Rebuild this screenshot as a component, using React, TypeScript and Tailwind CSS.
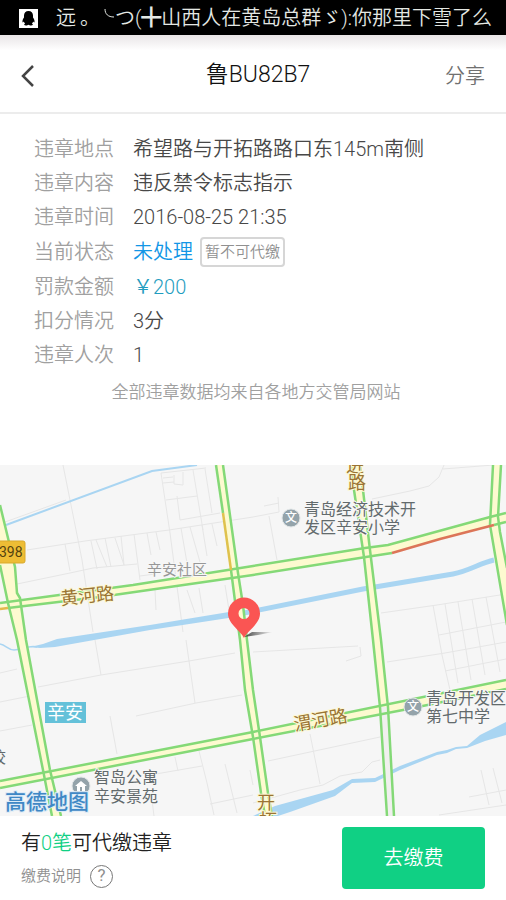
const details = [
   { label: "违章地点", value: "希望路与开拓路路口东145m南侧" },
   { label: "违章内容", value: "违反禁令标志指示" },
   { label: "违章时间", value: "2016-08-25 21:35" },
   { label: "当前状态", value: "未处理", tag: "暂不可代缴", color: "text-[#1296e6]" },
   { label: "罚款金额", value: "￥200", color: "text-[#1f9dc0]" },
   { label: "扣分情况", value: "3分" },
   { label: "违章人次", value: "1" },
];

// surface of every main road
const roads = [
   "M-9 505 0 565 8 603 17 640 43 770 52 816 61 816 50 770 26 640 19 597 15 567 0 505Z",
   "M0 603 133 585 253 566 365 548 388 545 490 517 506 513 506 522 490 526 392 553 366 557 253 575 100 597 0 609Z",
   "M216 465 223 513 231 570 240 640 245 690 253 737 261 793 265 816 272 816 268 793 260 737 253 690 247 640 243 605 238 573 223 465Z",
   "M351 465 354 490 364 557 373 640 380 707 388 707 381 640 370 550 363 490 360 465Z",
   "M493 465 490 525 506 623 506 563 500 532 498 517 501 465Z",
   "M0 781 253 732 506 680 506 689 403 710 253 739 0 788Z",
];

// traffic lines along both sides
const clearTraffic = [
   "M0 565 8 603 17 640 43 770 52 816",
   "M0 505 15 567 17 593 20 598 26 640 50 770 61 816",
   "M0 603 133 585 253 566 365 548 388 545 490 517 506 513",
   "M8 608 100 597 253 575 366 557 392 553",
   "M494 525 506 522",
   "M216 465 223 513",
   "M231 570 240 640 245 690 253 737 261 793 265 816",
   "M223 465 238 573 243 605 247 640 253 690 260 737 268 793 272 816",
   "M351 465 354 490 364 557 373 640 380 707 387 816",
   "M360 465 363 490 370 550 381 640 388 707 394 816",
   "M493 465 490 525 507 625",
   "M501 465 498 517 500 532 507 568",
   "M0 781 253 732 506 680",
   "M0 788 253 739 403 710 506 689",
];

const lanes = [
   "M63 465 70 500 82 560 93 632",
   "M5 522 66 500",
   "M27 550 85 541 169 530 253 517",
   "M17 584 70 573 93 568 137 564",
   "M65 544 70 571M91 541 97 569M96 540 107 567M105 538 111 567M115 538 124 565M121 536 124 565M134 534 140 580",
   "M161 473 170 533 183 632M161 473 206 468M166 500 197 496M177 496 180 520 220 513M193 470 203 530M205 469 212 513",
   "M174 475 174 484 183 485 183 472M163 478 173 477M163 483 174 482",
   "M147 533 151 555M156 532 160 550M181 528 187 563M190 527 200 562M202 525 207 556M212 524 217 546",
   "M155 590 156 610M187 590 195 613M199 588 203 613M225 585 229 610M140 576 155 574",
   "M253 517 279 512 278 497M264 506 279 503M269 516 277 560",
   "M372 499 410 491 429 486 439 477 444 465M443 469 506 464",
   "M381 613 437 605 506 594M433 605 442 655 450 690M445 604 458 683M458 602 471 680M472 599 485 675M486 597 500 672M439 635 506 622M445 671 506 659M387 662 445 653 506 642",
   "M0 673 17 669M38 687 101 675 189 661 235 653M95 640 101 675M186 640 195 703M136 716 196 703 242 695",
   "M0 731 32 725M110 716 117 754M253 652 358 646M360 647 361 656 346 661",
   "M150 775 202 766M175 757 178 771M199 751 207 783 214 815M225 764 237 813M210 804 253 795M250 770 253 785M152 800 154 816",
   "M268 761 380 737M310 734 320 784M253 803 300 790 323 785 340 776 362 772 372 762 380 760",
   "M481 770 489 805M493 768 502 803M469 797 506 790M439 815 506 805M0 702 30 696",
];

function StatusBar() {
   return (
      <div className="flex h-[35px] items-center bg-black pl-[19px] pr-[14px] pt-px text-[20px] leading-none font-[350] text-[#e4e8e4]">
         <svg className="size-[19px] shrink-0" viewBox="0 0 19 19" aria-hidden="true">
            <rect width="19" height="19" fill="#fff" />
            <path
               d="M9.5 2C6.700 2 5 4 5 6.600L5 8.500C4 9.800 3.200 11.600 3.500 13.100C3.700 13.900 4.600 13 4.900 12.500C5.100 13.400 5.500 14 6.100 14.500C5.200 15 5 15.500 5.300 16C6.100 16.800 8.600 16.500 9.500 15.700C10.400 16.500 12.900 16.800 13.700 16C14 15.500 13.800 15 12.900 14.500C13.500 14 13.900 13.400 14.100 12.500C14.400 13 15.300 13.900 15.500 13.100C15.800 11.600 15 9.800 14 8.500L14 6.600C14 4 12.300 2 9.500 2Z"
               fill="#000"
            />
         </svg>
         <span className="ml-[18px]">远</span>
         <span className="ml-1">。</span>
         <p className="ml-auto flex items-center whitespace-nowrap">
            <svg className="h-5 w-3" viewBox="0 0 12 20" fill="none" stroke="#e4e8e4" aria-hidden="true">
               <path d="M2 1C2 6 5 9 11 9" />
            </svg>
            つ(╋山西人在黄岛总群ゞ):你那里下雪了么
         </p>
      </div>
   );
}

function Poi({ x, y, lines, home }: any) {
   return (
      <g>
         <circle cx={x} cy={y} r="9" fill="#94a3aa" stroke="#e0e5e6" strokeWidth="1" />
         {home ? (
            <path
               d={`M${x - 6} ${y} L${x} ${y - 5} L${x + 6} ${y} L${x + 4} ${y} V${y + 5} H${x + 1} V${y + 1} H${x - 1} V${y + 5} H${x - 4} V${y}Z`}
               fill="#fff"
            />
         ) : (
            <text x={x} y={y + 4} textAnchor="middle" className="fill-white text-[12px] font-medium">
               文
            </text>
         )}
         {lines.map((line: any) => (
            <text
               key={line.text}
               x={line.x}
               y={line.y}
               className="fill-[#626a6c] stroke-[#f7f7f7] stroke-2 text-[16px] [paint-order:stroke]"
            >
               {line.text}
            </text>
         ))}
      </g>
   );
}

function ViolationMap() {
   return (
      <svg
         className="block h-auto w-full font-normal"
         viewBox="0 465 506 351"
         role="img"
         aria-label="违章地点地图"
      >
         <defs>
            <linearGradient id="pin-shadow">
               <stop offset="0" stopColor="#333" stopOpacity=".9" />
               <stop offset="1" stopColor="#333" stopOpacity="0" />
            </linearGradient>
         </defs>
         <rect y="465" width="506" height="351" fill="#f6f6f6" />

         <g fill="none" stroke="#e6e6e6" strokeWidth="1">
            {lanes.map((d) => (
               <path key={d} d={d} />
            ))}
         </g>

         <g fill="none" stroke="#a9d5f2">
            <path d="M6 525 152 471 197 465" strokeWidth="2" />
            <path d="M0 644 C6 645 8 650 14 650 C22 650 28 645 37 647" strokeWidth="1.5" />
            <path d="M244 613 363 589 453 574 C469 571 480 563 494 560" strokeWidth="5" />
         </g>
         <g fill="#a9d5f2">
            <path d="M30 647 43 644 57 639 150 625 235 611 235 617 150 630 55 647 40 648Z" />
            <path d="M253 816 275 806 333 790 352 779 375 778 400 766 437 752 447 750 456 747 467 746 480 735 506 722 506 735 485 741 467 748 456 749 447 753 437 755 400 770 375 782 352 783 335 796 290 812 278 816Z" />
         </g>

         <g fill="#fdfad0">
            {roads.map((d) => (
               <path key={d} d={d} />
            ))}
         </g>
         <path d="M380 707 387 816 394 816 388 707Z" fill="#f0f0ee" />
         <g fill="none" stroke="#84d977" strokeWidth="2.5">
            {clearTraffic.map((d) => (
               <path key={d} d={d} />
            ))}
         </g>
         <g fill="none" strokeWidth="2.5">
            <path d="M223 513 231 570" stroke="#dfc24d" />
            <path d="M0 609 8 608" stroke="#e3b94d" />
            <path d="M392 553 440 539 494 525" stroke="#dc7558" />
         </g>

         <rect x="-8" y="541" width="33" height="22" rx="2" fill="#eebd35" stroke="#d9a92c" />
         <text x="-1" y="557" className="fill-[#54430f] text-[14px]">
            398
         </text>

         <g className="fill-[#9a7433] stroke-[#fdf8d4] stroke-2 text-[18px] [paint-order:stroke]">
            <text transform="translate(61 605) rotate(-6)">黄河路</text>
            <text transform="translate(295 731) rotate(-10)">渭河路</text>
            <text x="346" y="472">进</text>
            <text x="348" y="489">路</text>
            <text x="257" y="809">开</text>
            <text x="259" y="827">拓</text>
         </g>

         <text x="147" y="575" className="fill-[#979797] stroke-[#f7f7f7] stroke-2 text-[15px] [paint-order:stroke]">
            辛安社区
         </text>
         <text x="-10" y="763" className="fill-[#626a6c] text-[16px]">
            校
         </text>

         <rect x="45" y="702" width="41" height="21" fill="#64c1d9" />
         <text x="47" y="719" className="fill-white text-[18px]">
            辛安
         </text>

         <Poi
            x={291}
            y={518}
            lines={[
               { text: "青岛经济技术开", x: 304, y: 515 },
               { text: "发区辛安小学", x: 304, y: 533 },
            ]}
         />
         <Poi
            x={413}
            y={707}
            lines={[
               { text: "青岛开发区", x: 426, y: 704 },
               { text: "第七中学", x: 426, y: 722 },
            ]}
         />
         <Poi
            home
            x={81}
            y={786}
            lines={[
               { text: "智岛公寓", x: 94, y: 783 },
               { text: "辛安景苑", x: 94, y: 802 },
            ]}
         />

         <text
            x="5"
            y="809"
            className="fill-[#3f88c5] stroke-[#dcebf7] stroke-2 text-[21px] font-medium [paint-order:stroke]"
         >
            高德地图
         </text>

         <path d="M244 637 L252 632 L273 632 L258 635Z" fill="url(#pin-shadow)" />
         <path
            fillRule="evenodd"
            d="M244 638C241 631 228 624 228 613.500A16 16 0 0 1 260 613.500C260 624 247 631 244 638ZM244 608A5.500 5.500 0 1 0 244 619A5.500 5.500 0 1 0 244 608Z"
            fill="#fa5553"
         />
      </svg>
   );
}

export default function App() {
   return (
      <div className="flex min-h-screen flex-col bg-white font-['Roboto','Noto_Sans_CJK_SC',sans-serif] font-light">
         <StatusBar />

         <header className="flex h-[79px] items-center justify-between border-b-2 border-[#ececec] bg-linear-to-b from-[#e9e5e7] to-white to-20% px-[21px] pt-1">
            <button type="button" aria-label="返回" className="w-[50px] text-[#444]">
               <svg className="h-[22px] w-[14px]" viewBox="0 0 14 22" fill="none" stroke="currentColor" strokeWidth="2.5">
                  <path d="M12 1 2 11 12 21" />
               </svg>
            </button>
            <h1 className="text-[23px] font-[350] text-[#111]">鲁BU82B7</h1>
            <button type="button" className="text-[20px] font-[350] text-[#707070]">
               分享
            </button>
         </header>

         <main className="flex flex-1 flex-col">
            <dl className="px-[34px] pt-[18px] text-[20px] font-[350]">
               {details.map((item) => (
                  <div key={item.label} className="flex min-h-[34px] items-center">
                     <dt className="w-[99px] shrink-0 text-[#a0a0a0]">{item.label}</dt>
                     <dd className={`flex items-center ${item.color ?? "text-[#484848]"}`}>
                        {item.value}
                        {item.tag && (
                           <span className="my-[3px] ml-[7px] rounded-[4px] border-2 border-[#d6d6d6] px-[3px] text-[15px] leading-[26px] text-[#909090]">
                              {item.tag}
                           </span>
                        )}
                     </dd>
                  </div>
               ))}
            </dl>
            <p className="mt-2 mb-auto pb-4 pl-1.5 text-center text-[17px] font-[350] text-[#a0a0a0]">
               全部违章数据均来自各地方交管局网站
            </p>
            <ViolationMap />
         </main>

         <footer className="flex h-[84px] items-center justify-between px-[21px]">
            <div>
               <p className="text-[20px] leading-7 font-[350] text-[#222]">
                  有<span className="text-[#10d084]">0笔</span>可代缴违章
               </p>
               <a href="#help" className="mt-2 flex items-center gap-[9px] text-[15px] font-[350] text-[#909090]">
                  缴费说明
                  <span className="flex size-[23px] items-center justify-center rounded-full border border-[#777] text-[17px] font-normal">
                     ?
                  </span>
               </a>
            </div>
            <button type="button" className="h-[62px] w-[143px] rounded-[4px] bg-[#10d084] text-[20px] font-[350] text-white">
               去缴费
            </button>
         </footer>
      </div>
   );
}
